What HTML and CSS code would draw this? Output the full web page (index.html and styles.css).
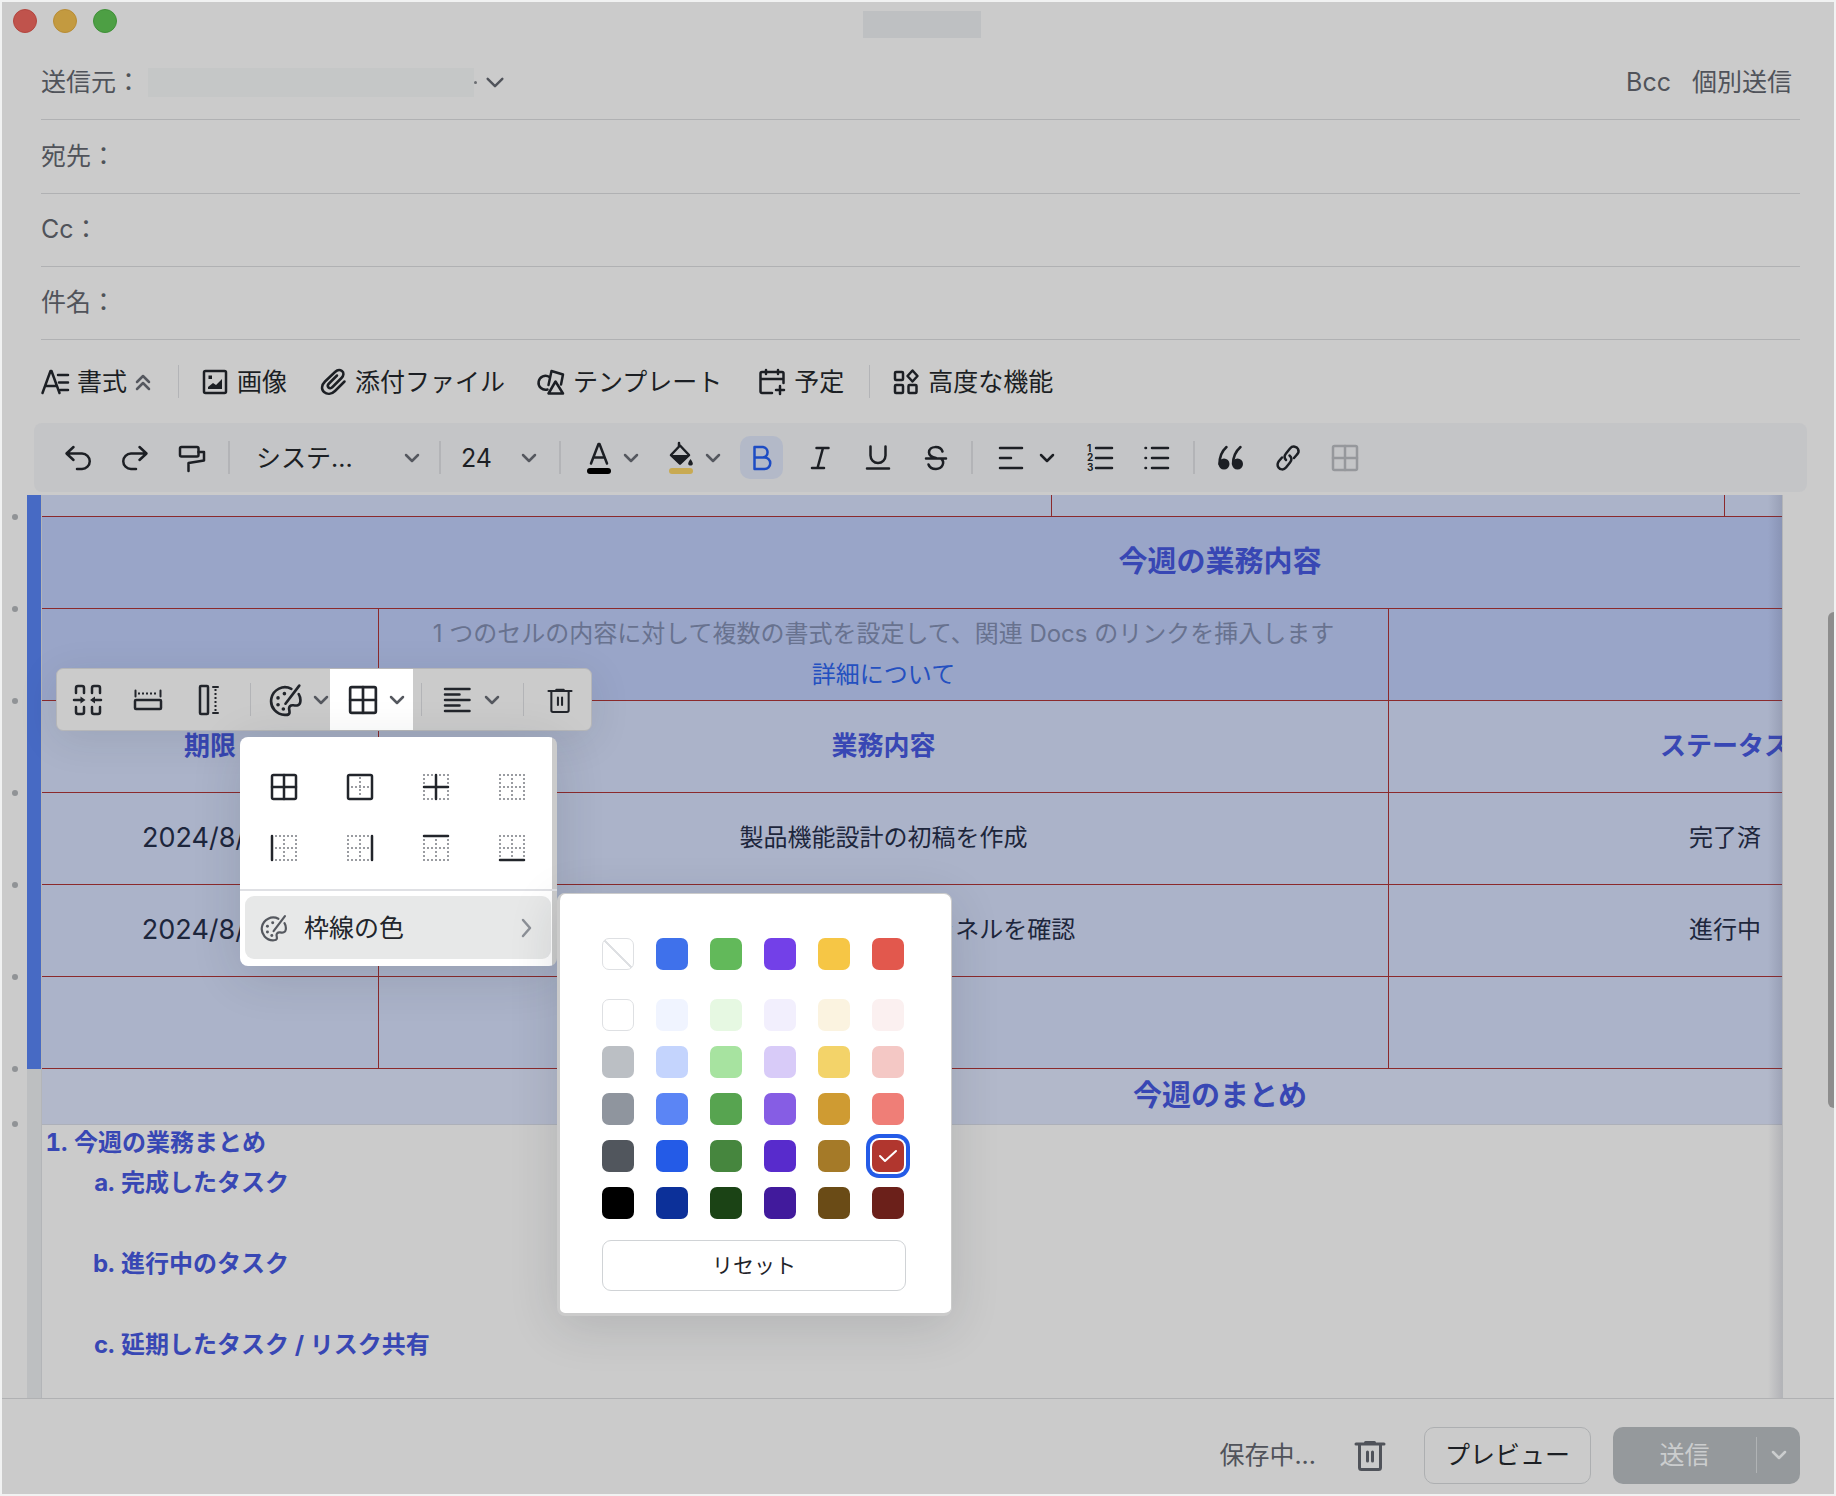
FILE: index.html
```html
<!DOCTYPE html>
<html lang="ja">
<head>
<meta charset="utf-8">
<title>メール作成</title>
<link rel="stylesheet" href="styles.css">
</head>
<body>
<svg class="sprite" aria-hidden="true">
  <symbol id="chev" viewBox="0 0 18 12"><path d="M3 3l6 6 6-6"/></symbol>
  <symbol id="palette" viewBox="0 0 32 32"><path d="M21 5.500A13 13 0 1 0 16 30c4 0 3.500-2.500 3-5s1-4.500 4-4 6 .5 6.500-3.500c.3-2.500-.3-5-1.500-7"/><path d="M28.500 2.500 15.500 19.500"/><g class="fill"><circle cx="8.500" cy="14" r="1.700"/><circle cx="14.500" cy="10" r="1.700"/><circle cx="8.500" cy="20.500" r="1.700"/><circle cx="13.500" cy="24.500" r="1.700"/></g></symbol>
  <symbol id="trash" viewBox="0 0 32 34"><path d="M2 6h28M11.500 4.500h9M5.500 6.500v23a2 2 0 0 0 2 2h17a2 2 0 0 0 2-2v-23"/><path d="M13.500 14v9M18.500 14v9"/></symbol>
  <symbol id="grid" viewBox="0 0 28 28"><rect x="2" y="2" width="24" height="24" rx="1.500"/><path d="M14 2v24M2 14h24"/></symbol>
  <symbol id="dots-all" viewBox="0 0 28 28"><path class="dot" d="M1 2h26M1 26h26M2 1v26M26 1v26M14 1v26M1 14h26"/></symbol>
</svg>

<main class="window">
  <header class="titlebar">
    <div class="lights"><span class="light red"></span><span class="light amber"></span><span class="light green"></span></div>
    <span class="masked-title"></span>
  </header>

  <form class="fields">
    <div class="field">
      <span class="field-label">送信元：</span>
      <button type="button" class="sender" aria-label="送信元を選択"><span class="masked-sender"></span><span class="sender-dot"></span><svg class="ico sender-chev"><use href="#chev"/></svg></button>
      <span class="field-actions"><button type="button">Bcc</button><button type="button">個別送信</button></span>
    </div>
    <div class="field tall"><label class="field-label" for="to">宛先：</label><input id="to" type="text"></div>
    <div class="field"><label class="field-label" for="cc">Cc：</label><input id="cc" type="text"></div>
    <div class="field"><label class="field-label" for="subject">件名：</label><input id="subject" type="text"></div>
  </form>

  <nav class="insert-bar">
    <button class="insert fmt"><svg class="ico i28" viewBox="0 0 28 28"><path d="M1.500 25 9.500 3h1l8 22M4.500 18h11M17 7h10M18 14.500h9M19.500 22h7.500"/></svg><span>書式</span><svg class="ico i16 muted" viewBox="0 0 16 20"><path d="M2 10l6-6 6 6M2 17l6-6 6 6"/></svg></button>
    <i class="sep"></i>
    <button class="insert"><svg class="ico i28" viewBox="0 0 28 28"><rect x="3" y="3" width="22" height="22" rx="1.500"/><path class="fill" d="M7 21v-2l5-4 3 2 6-6v10z"/><rect class="fill" x="7.500" y="7.500" width="3.500" height="3.500"/></svg><span>画像</span></button>
    <button class="insert"><svg class="ico i28" viewBox="0 0 28 28"><path d="M25.500 13.500 16 23c-3.500 3.500-8 3.500-11 1s-2.500-7 1-10.500L16 4c2.500-2.500 5-2.500 7-1s2 4.500-.5 7l-9 9c-1.500 1.500-3 1.500-4 .5s-1-2.500.5-4l8-8"/></svg><span>添付ファイル</span></button>
    <button class="insert tpl"><svg class="ico i28" viewBox="0 0 28 28"><path d="M10.500 21.500a7 7 0 1 1 2-12.500"/><path d="M11.500 17 14.500 3l11.500 3.500-2 10"/><path d="M18.500 13.500 11.500 25.500H26z"/></svg><span>テンプレート</span></button>
    <button class="insert cal"><svg class="ico i28" viewBox="0 0 28 28"><path d="M14 25H4a1.500 1.500 0 0 1-1.500-1.500V5.500A1.500 1.500 0 0 1 4 4h20a1.500 1.500 0 0 1 1.500 1.500V15M2.500 11h23M8 2v4M20 2v4M22 18v8M18 22h8"/></svg><span>予定</span></button>
    <i class="sep"></i>
    <button class="insert adv"><svg class="ico i28" viewBox="0 0 28 28"><rect x="3" y="4" width="8" height="8" rx="1"/><rect x="3" y="17" width="8" height="8" rx="1"/><rect x="16.500" y="17" width="8" height="8" rx="1"/><path d="M20.500 2.500l5 5.500-5 5.500-5-5.500z"/></svg><span>高度な機能</span></button>
  </nav>

  <div class="format-bar">
    <div class="grp g-history">
      <button class="tb" aria-label="元に戻す"><svg class="ico i28" viewBox="0 0 28 28"><path d="M9.500 3 2.500 9.500l7 6.500M3 9.500h15a7.500 7.500 0 0 1 0 15.500h-5"/></svg></button>
      <button class="tb" aria-label="やり直す"><svg class="ico i28" viewBox="0 0 28 28"><path d="M18.500 3l7 6.500-7 6.500M25 9.500H10a7.500 7.500 0 0 0 0 15.500h5"/></svg></button>
      <button class="tb" aria-label="書式のコピー"><svg class="ico i28" viewBox="0 0 28 28"><rect x="2" y="3" width="18.500" height="9.500" rx="1.500"/><path d="M20.500 8h5.500v8.500L10.500 19v8"/></svg></button>
    </div>
    <i class="sep"></i>
    <div class="grp g-font"><select aria-label="フォント"><option>システ...</option></select><svg class="ico chev muted"><use href="#chev"/></svg></div>
    <i class="sep"></i>
    <div class="grp g-size"><select aria-label="文字サイズ"><option>24</option></select><svg class="ico chev muted"><use href="#chev"/></svg></div>
    <i class="sep"></i>
    <div class="grp g-style">
      <button class="drop" aria-label="文字の色"><svg class="ico i34" viewBox="0 0 28 34"><path d="M6 22.500 13.500 3h1L22 22.500M8.500 16.500h11"/><path class="ink" d="M5 30h18"/></svg><svg class="ico chev muted"><use href="#chev"/></svg></button>
      <button class="drop" aria-label="塗りつぶしの色"><svg class="ico i34" viewBox="0 0 28 34"><path d="M12 2v3M13 4.500 4 14l9 8.500 9-8.500z"/><path class="fill" d="M3 14h20l-10 9.500z"/><path class="fill" d="M23.500 18c4 5 2 6.500 0 6.500s-4-1.500 0-6.500z"/><path class="gold" d="M5 30h18"/></svg><svg class="ico chev muted"><use href="#chev"/></svg></button>
      <div class="row14 styles">
        <button class="tb on" aria-label="太字" aria-pressed="true"><svg class="ico i28" viewBox="0 0 28 28"><path d="M6.500 3h8.500a5.300 5.300 0 0 1 0 10.500H6.500zM6.500 13.500h10a5.700 5.700 0 0 1 0 11.500h-10z"/></svg></button>
        <button class="tb" aria-label="斜体"><svg class="ico i28" viewBox="0 0 28 28"><path d="M10.500 4h12M6 24h12M17 4l-5.500 20"/></svg></button>
        <button class="tb" aria-label="下線"><svg class="ico i28" viewBox="0 0 28 28"><path d="M6.500 2.500v9a7.500 7.500 0 0 0 15 0v-9M3 24.500h22"/></svg></button>
        <button class="tb" aria-label="取り消し線"><svg class="ico i28" viewBox="0 0 28 28"><path d="M20.500 7.500c-2-6-13.500-6-13.500 1 0 3 2.500 4.500 7 5.500M4 14.500h20M19.500 15c3.500 3.500 1 10-5.500 10-4 0-6.500-1.500-7.500-4.500"/></svg></button>
      </div>
    </div>
    <i class="sep"></i>
    <div class="grp g-list">
      <button class="drop wide" aria-label="配置"><svg class="ico i28" viewBox="0 0 28 28"><path d="M3 4h22M3 14h11M3 24h22"/></svg><svg class="ico chev"><use href="#chev"/></svg></button>
      <div class="row14">
        <button class="tb" aria-label="番号付きリスト"><svg class="ico i28" viewBox="0 0 28 28"><path d="M10 4h16M10 14h16M10 24h16"/><g class="nums"><text x="1" y="8">1</text><text x="1" y="17">2</text><text x="1" y="27">3</text></g></svg></button>
        <button class="tb" aria-label="箇条書き"><svg class="ico i28" viewBox="0 0 28 28"><path d="M9 4h16M9 14h16M9 24h16M2.500 4h.5M2.500 14h.5M2.500 24h.5"/></svg></button>
      </div>
    </div>
    <i class="sep"></i>
    <div class="grp g-extra">
      <button class="tb" aria-label="引用"><svg class="ico i28" viewBox="0 0 28 28"><path d="M9.500 3C5 7 2.500 12 2.500 20M23.500 3C19 7 16 12 16 20"/><ellipse class="fill" cx="7" cy="20" rx="5.500" ry="5.500"/><ellipse class="fill" cx="20.500" cy="20" rx="5.500" ry="5.500"/></svg></button>
      <button class="tb" aria-label="リンク"><svg class="ico i28" viewBox="0 0 28 28"><path d="M12 16c-2-2-2-4 0-6.500l4-5c3-3.500 7-1.500 8 .5s.5 4-1 5.500l-3 3.500"/><path d="M15.500 11.500c2.500 2 2.500 4.500.5 7l-4 5c-2.500 3-6 2-7.500 0s-1-4.500.5-6.500l3-3.500"/></svg></button>
      <button class="tb faded" aria-label="表" disabled><svg class="ico i28"><use href="#grid"/></svg></button>
    </div>
  </div>

  <section class="editor">
    <ul class="handles" aria-hidden="true"><li></li><li></li><li></li><li></li><li></li><li></li><li></li><li></li></ul>
    <div class="gutter"><span></span></div>
    <div class="sheet">
      <table>
        <colgroup><col><col><col class="slim"><col><col class="slim"><col><col></colgroup>
        <tbody>
        <tr class="cut"><td colspan="3"></td><td colspan="2"></td><td colspan="2"></td></tr>
        <tr class="tint"><th colspan="7" class="big">今週の業務内容</th></tr>
        <tr class="tint"><td></td><td colspan="3" class="hint">1 つのセルの内容に対して複数の書式を設定して、関連 Docs のリンクを挿入します<br><a href="#">詳細について</a></td><td colspan="2"></td><td></td></tr>
        <tr><th>期限</th><th colspan="3">業務内容</th><th colspan="2">ステータス</th><th></th></tr>
        <tr><td class="date">2024/8/22</td><td colspan="3">製品機能設計の初稿を作成</td><td colspan="2">完了済</td><td></td></tr>
        <tr><td class="date">2024/8/23</td><td colspan="3">製品プロモーションチャネルを確認</td><td colspan="2">進行中</td><td></td></tr>
        <tr><td></td><td colspan="3"></td><td colspan="2"></td><td></td></tr>
        <tr class="summary"><th colspan="7" class="big">今週のまとめ</th></tr>
        </tbody>
      </table>
      <ol class="report">
        <li>今週の業務まとめ
          <ol><li>完成したタスク</li><li>進行中のタスク</li><li>延期したタスク / リスク共有</li></ol>
        </li>
      </ol>
    </div>
    <span class="scroll"></span>

    <div class="table-tools">
      <button class="t-merge" aria-label="セルを結合"><svg class="ico i30" viewBox="0 0 30 32"><path d="M12 9V4a2 2 0 0 0-2-2H6a2 2 0 0 0-2 2v5M12 23v5a2 2 0 0 1-2 2H6a2 2 0 0 1-2-2v-5M28 9V4a2 2 0 0 0-2-2h-4a2 2 0 0 0-2 2v5M28 23v5a2 2 0 0 1-2 2h-4a2 2 0 0 1-2-2v-5M2 16h8M29 16h-8"/><path class="fill" d="M8.500 12.500l5 3.500-5 3.500zM23 12.500 18 16l5 3.500z"/></svg></button>
      <button class="t-row" aria-label="列幅をそろえる"><svg class="ico i30" viewBox="0 0 30 32"><rect x="2" y="16" width="26" height="9" rx="1"/><path class="thin" d="M5 9.500h20"/><path class="cap" d="M2.500 6.500v6M27.500 6.500v6"/></svg></button>
      <button class="t-col" aria-label="行の高さをそろえる"><svg class="ico i30" viewBox="0 0 30 32"><rect x="6" y="2" width="8" height="28" rx="1"/><path class="thin" d="M21.500 5v22"/><path class="cap" d="M19 3h5M19 29h5"/></svg></button>
      <i class="sep"></i>
      <button class="drop t-pal" aria-label="セルの色"><svg class="ico i32"><use href="#palette"/></svg><svg class="ico chev muted"><use href="#chev"/></svg></button>
      <button class="drop t-border" aria-label="枠線" aria-expanded="true"><svg class="ico i30"><use href="#grid"/></svg><svg class="ico chev muted"><use href="#chev"/></svg></button>
      <i class="sep"></i>
      <button class="drop t-align" aria-label="配置"><svg class="ico i28" viewBox="0 0 28 28"><path d="M2 3h24.500M2 8.500h14.500M2 14h24.500M2 19.500h14.500M2 25h24.500"/></svg><svg class="ico chev muted"><use href="#chev"/></svg></button>
      <i class="sep"></i>
      <button class="t-del" aria-label="表を削除"><svg class="ico i28"><use href="#trash"/></svg></button>
    </div>

    <div class="border-menu">
      <div class="border-grid">
        <button aria-label="すべての枠線"><svg class="ico i28"><use href="#grid"/></svg></button>
        <button aria-label="外枠"><svg class="ico i28" viewBox="0 0 28 28"><path class="dot" d="M14 4v20M5 14h19"/><rect x="2" y="2" width="24" height="24" rx="1.500"/></svg></button>
        <button aria-label="内側の枠線"><svg class="ico i28" viewBox="0 0 28 28"><use href="#dots-all" width="28" height="28"/><path d="M14 2v24M2 14h24"/></svg></button>
        <button aria-label="枠線なし"><svg class="ico i28"><use href="#dots-all"/></svg></button>
        <button aria-label="左枠線"><svg class="ico i28" viewBox="0 0 28 28"><use href="#dots-all" width="28" height="28"/><path d="M2 2v24"/></svg></button>
        <button aria-label="右枠線"><svg class="ico i28" viewBox="0 0 28 28"><use href="#dots-all" width="28" height="28"/><path d="M26 2v24"/></svg></button>
        <button aria-label="上枠線"><svg class="ico i28" viewBox="0 0 28 28"><use href="#dots-all" width="28" height="28"/><path d="M2 2h24"/></svg></button>
        <button aria-label="下枠線"><svg class="ico i28" viewBox="0 0 28 28"><use href="#dots-all" width="28" height="28"/><path d="M2 26h24"/></svg></button>
      </div>
      <button class="color-item"><svg class="ico i28 muted"><use href="#palette"/></svg><span>枠線の色</span><svg class="ico i20 arrow" viewBox="0 0 20 20"><path d="M7 2l7 8-7 8"/></svg></button>
    </div>

    <div class="colors">
      <div class="swatches">
        <button aria-label="なし" class="none"></button><button aria-label="青" style="--c:#3f71eb"></button><button aria-label="緑" style="--c:#62b95a"></button><button aria-label="紫" style="--c:#7340e8"></button><button aria-label="黄" style="--c:#f6c645"></button><button aria-label="赤" style="--c:#e2584d"></button>
      </div>
      <div class="swatches shades">
        <button aria-label="白" class="outlined"></button><button aria-label="青 1" style="--c:#f0f4ff"></button><button aria-label="緑 1" style="--c:#e6f8e2"></button><button aria-label="紫 1" style="--c:#f2effd"></button><button aria-label="黄 1" style="--c:#fbf3e0"></button><button aria-label="赤 1" style="--c:#fbf0f0"></button>
        <button aria-label="灰 2" style="--c:#bbbfc4"></button><button aria-label="青 2" style="--c:#c4d4fd"></button><button aria-label="緑 2" style="--c:#a7e3a0"></button><button aria-label="紫 2" style="--c:#d8cbf8"></button><button aria-label="黄 2" style="--c:#f3d369"></button><button aria-label="赤 2" style="--c:#f4c8c5"></button>
        <button aria-label="灰 3" style="--c:#8f959e"></button><button aria-label="青 3" style="--c:#5b85f5"></button><button aria-label="緑 3" style="--c:#57a450"></button><button aria-label="紫 3" style="--c:#865de4"></button><button aria-label="黄 3" style="--c:#cf9b32"></button><button aria-label="赤 3" style="--c:#ef7e77"></button>
        <button aria-label="灰 4" style="--c:#51565d"></button><button aria-label="青 4" style="--c:#245be7"></button><button aria-label="緑 4" style="--c:#46863e"></button><button aria-label="紫 4" style="--c:#582bcc"></button><button aria-label="黄 4" style="--c:#a57a28"></button><button aria-label="赤 4" class="picked" style="--c:#b1362e"><svg class="ico i20" viewBox="0 0 20 20"><path d="M2 10l5 5L18 5"/></svg></button>
        <button aria-label="黒" style="--c:#000000"></button><button aria-label="青 5" style="--c:#0c3099"></button><button aria-label="緑 5" style="--c:#1b4315"></button><button aria-label="紫 5" style="--c:#411a9c"></button><button aria-label="黄 5" style="--c:#6a4b16"></button><button aria-label="赤 5" style="--c:#6b201a"></button>
      </div>
      <button class="reset">リセット</button>
    </div>
  </section>

  <footer class="actions">
    <span class="saving">保存中...</span>
    <button class="discard" aria-label="下書きを破棄"><svg class="ico i34s"><use href="#trash"/></svg></button>
    <button class="preview">プレビュー</button>
    <div class="send"><button class="send-main">送信</button><i></i><button class="send-more" aria-label="送信オプション"><svg class="ico chev"><use href="#chev"/></svg></button></div>
  </footer>
</main>
</body>
</html>
```
FILE: styles.css
```css
* { box-sizing: border-box; }
html, body { height: 100%; }
body { margin: 0; background: #f1f2f2; color: #1c1f24; font-family: Inter, "Noto Sans CJK JP", sans-serif; font-size: 25px; line-height: 40px; }
button, input, select { font: inherit; color: inherit; background: none; border: 0; padding: 0; margin: 0; border-radius: 0; }
button { display: flex; align-items: center; justify-content: center; white-space: nowrap; }
select { appearance: none; opacity: 1; }
ul, ol { list-style: none; margin: 0; padding: 0; }
.sprite { position: absolute; width: 0; height: 0; }

.ico { display: block; flex: none; overflow: visible; fill: none; stroke: currentColor; stroke-width: 2.5; stroke-linecap: round; stroke-linejoin: round; }
.ico .fill, .fill { fill: currentColor; stroke: none; }
.i16 { width: 16px; height: 20px; }
.i20 { width: 20px; height: 20px; }
.i28 { width: 28px; height: 28px; }
.i30 { width: 30px; height: 32px; }
.i32 { width: 34px; height: 34px; }
.i34 { width: 28px; height: 34px; }
.i34s { width: 32px; height: 34px; stroke-width: 3; }
.chev { width: 18px; height: 12px; }
.muted { color: #55585f; }
.sep { flex: none; width: 2px; height: 33px; background: #b3b4b7; }

/* Window frame */
.window { display: flex; flex-direction: column; height: 100vh; min-height: 900px; border: 2px solid #f1f2f2; background: #cbcbcb; overflow: hidden; }

.titlebar { display: grid; grid-template-columns: 1fr auto 1fr; flex: none; height: 45px; padding: 7px 3px 0 11px; align-items: start; }
.lights { display: flex; gap: 16px; }
.light { width: 24px; height: 24px; border-radius: 50%; border: 1px solid; }
.red { background: #c0534c; border-color: #b3463f; }
.amber { background: #c39a40; border-color: #b88c35; }
.green { background: #4d9f44; border-color: #3f9038; }
.masked-title { width: 118px; height: 27px; margin-top: 2px; background: #bec0c2; }

/* Address fields */
.fields { flex: none; padding: 0 34px 0 39px; color: #50535a; }
.field { display: flex; align-items: center; height: 73px; padding-bottom: 2px; border-bottom: 1px solid #b0b1b3; }
.tall { height: 74px; }
.field-label { flex: none; }
.field input { flex: 1; min-width: 0; outline: 0; }
.sender { margin-left: 7px; color: #50535a; }
.masked-sender { width: 326px; height: 29px; background: #c5c7c7; }
.sender-dot { width: 3px; height: 3px; border-radius: 50%; background: #6a6d72; }
.sender-chev { width: 22px; height: 15px; margin-left: 7px; stroke-width: 2; }
.field-actions { display: flex; gap: 21px; margin-left: auto; padding-right: 8px; }

/* Insert bar */
.insert-bar { display: flex; flex: none; align-items: center; height: 83px; padding-left: 39px; }
.insert { gap: 8px; margin-right: 32px; }
.insert-bar .sep { width: 1px; }
.fmt { margin-right: 27px; }
.fmt + .sep { margin-right: 22px; }
.tpl { margin-right: 36px; }
.cal { margin-right: 25px; }
.cal + .sep { margin-right: 22px; }

/* Formatting bar */
.format-bar { display: flex; flex: none; align-items: center; height: 69px; margin: 0 27px 3px 32px; border-radius: 8px; background: #c4c5c7; }
.grp { display: flex; flex: none; align-items: center; }
.row14 { display: flex; gap: 14px; }
.row14.styles { gap: 15px; }
.tb { width: 43px; height: 43px; border-radius: 10px; }
.tb.on { background: #b3b9c8; color: #1d4cc4; }
.faded { color: #96989c; }
.g-history { width: 194px; padding-left: 22px; gap: 14px; }
.g-font { width: 209px; padding: 0 18px 0 26px; }
.g-size { width: 118px; padding: 0 21px 0 20px; }
.grp select { flex: 1; min-width: 0; height: 43px; outline: 0; }
.g-style { width: 410px; padding-left: 24px; }
.drop { gap: 9px; }
.g-style .drop { margin-right: 27px; }
.g-style .drop + .drop { margin-right: 18px; }
.ink { stroke: #000000; stroke-width: 6; }
.gold { stroke: #c8aa52; stroke-width: 6; }
.g-list { width: 220px; padding-left: 24px; gap: 22px; }
.drop.wide { gap: 13px; }
.g-extra { padding-left: 14px; gap: 14px; }
.nums { fill: currentColor; stroke: none; font: bold 10px Inter, sans-serif; }

/* Editing area */
.editor { position: relative; display: grid; grid-template-columns: 25px 14px 1fr 51px; flex: 1; min-height: 0; overflow: hidden; }
.handles li { display: flex; align-items: flex-end; justify-content: center; height: 92px; }
.handles li::after { content: ""; width: 6px; height: 6px; margin-bottom: -3px; border-radius: 50%; background: #909396; }
.handles li:first-child { height: 22px; }
.handles li:last-child { height: 55px; }
.gutter { background: #bdbfc1; }
.gutter span { display: block; height: 574px; background: #476ac4; }
.sheet { position: relative; min-width: 0; overflow: hidden; border-left: 1px solid #b3b5b8; border-right: 1px solid #b3b5b8; }
.sheet::after { content: ""; position: absolute; inset: 0 0 0 auto; width: 14px; background: linear-gradient(to right, rgba(60, 65, 90, 0), rgba(60, 65, 90, .17)); }

table { width: 2357px; margin-left: -1px; table-layout: fixed; border-collapse: collapse; font-size: 24px; }
col { width: 337px; }
col.slim { width: 336px; }
td, th { height: 92px; padding: 0; text-align: center; vertical-align: middle; background: #abb3c9; border: 1px solid #8b2a2c; color: #1d263c; }
th { color: #3847b4; font-size: 26px; font-weight: 700; }
th.big { font-size: 29px; }
.cut td { height: 21px; border-top: 0; }
.tint td, .tint th { background: #99a5c8; }
.hint { line-height: 41px; white-space: nowrap; }
td.hint { color: #68728f; }
.hint a { color: #2450c0; text-decoration: none; }
td.date { font-size: 27px; }
.summary th { height: 56px; background: #b2b8ca; border: 0; border-top: 1px solid #8b2a2c; border-bottom: 1px solid #adb0b9; }

.report { margin-top: -2px; padding-left: 32px; color: #3847b4; font-size: 24px; font-weight: 700; list-style: decimal; line-height: 40px; }
.report ol { padding-left: 47px; list-style: lower-alpha; }
.report ol li { padding-bottom: 41px; }

.scroll { position: absolute; right: 0; top: 117px; width: 6px; height: 496px; border-radius: 6px 0 0 6px; background: #8d8d8d; }

/* Floating table toolbar */
.table-tools { position: absolute; left: 54px; top: 173px; display: flex; align-items: center; height: 63px; width: 536px; padding-left: 15px; border: 1px solid #b5b6b8; border-radius: 7px; background: #cbcbcb; box-shadow: 0 8px 40px rgba(31, 35, 41, .1); color: #22252b; }
.table-tools > button { flex: none; height: 61px; }
.table-tools .sep { width: 1px; }
.t-row, .t-col { margin-left: 31px; }
.t-col + .sep { margin-left: 26px; }
.t-pal { margin-left: 18px; gap: 9px; width: 61px; }
.t-border { width: 83px; gap: 10px; padding-left: 10px; background: #ffffff; }
.t-border + .sep { margin-left: 8px; }
.t-align { margin-left: 21px; gap: 12px; }
.t-align + .sep { margin-left: 22px; }
.t-del { margin-left: 22px; }
.thin { stroke-width: 2; stroke-dasharray: 2 2; stroke-linecap: butt; }
.cap { stroke-width: 2; }
.dot { stroke: #9a9ca1; stroke-width: 2; stroke-dasharray: 2 2; stroke-linecap: butt; }

/* Border menu */
.border-menu { position: absolute; left: 238px; top: 242px; width: 317px; height: 229px; border-radius: 8px; background: linear-gradient(to right, #ffffff 312px, #cbcbcb 312px); box-shadow: 0 10px 50px rgba(31, 35, 41, .14); color: #22252b; }
.border-menu::before { content: ""; position: absolute; z-index: -1; left: 0; top: -2px; width: 312px; height: 231px; background: #cbd3ee; }
.border-grid { display: grid; grid-template-columns: repeat(4, 28px); grid-auto-rows: 28px; gap: 33px 48px; height: 154px; padding: 36px 0 0 30px; border-bottom: 2px solid #dfe0e4; }
.color-item { width: 306px; height: 63px; margin: 5px; padding: 0 15px; justify-content: flex-start; gap: 16px; border-radius: 9px; background: #e7e8e8; }
.arrow { margin-left: auto; color: #8c9097; }

/* Color picker */
.colors { position: absolute; left: 555px; top: 398px; width: 395px; padding: 44px 43px 22px 42px; border-radius: 8px; border: solid #cbcbcb; border-width: 1px 1px 3px 3px; background: #ffffff; box-shadow: 0 10px 50px rgba(31, 35, 41, .14); }
.swatches { display: grid; grid-template-columns: repeat(6, 32px); gap: 15px 22px; }
.swatches button { width: 32px; height: 32px; border-radius: 7px; background: var(--c); }
.shades { margin-top: 29px; }
.swatches .outlined { border: 1px solid #dee0e3; background: #ffffff; }
.swatches .none { border: 1px solid #dee0e3; background: linear-gradient(45deg, #ffffff 48%, #dee0e3 48%, #dee0e3 52%, #ffffff 52%); }
.swatches .picked { color: #ffffff; box-shadow: 0 0 0 2px #ffffff, 0 0 0 6px #245be7; }
.picked .ico { stroke-width: 2; }
.reset { width: 304px; height: 51px; margin-top: 21px; border: 1px solid #d0d3d6; border-radius: 9px; color: #1f2329; font-size: 21px; }

/* Footer */
.actions { display: flex; flex: none; align-items: center; justify-content: flex-end; height: 96px; padding: 17px 34px 0 0; border-top: 1px solid #b0b1b3; }
.saving { color: #50535a; }
.discard { margin-left: 38px; color: #50535a; }
.preview { width: 167px; height: 57px; margin-left: 38px; border: 1px solid #adafb1; border-radius: 10px; }
.send { display: flex; align-items: center; width: 187px; height: 57px; margin-left: 22px; border-radius: 10px; background: #95999c; color: #cbcdce; }
.send i { width: 1px; height: 36px; background: #b0b3b5; }
.send-main { flex: 1; }
.send-more { width: 43px; }
```
